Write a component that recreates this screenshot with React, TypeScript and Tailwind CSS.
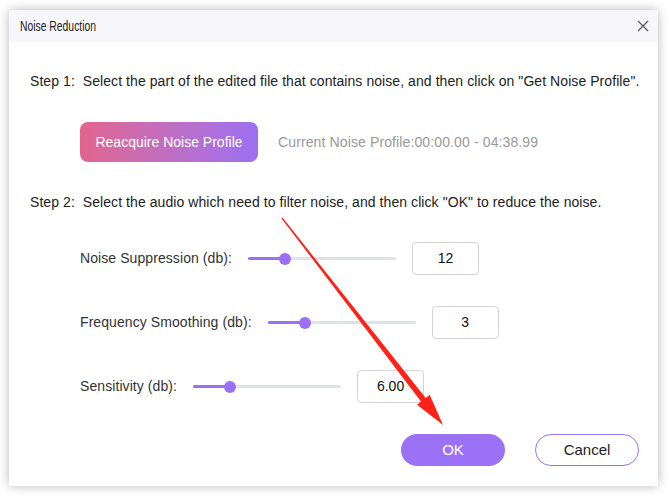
import React from "react";

function Slider() {
  return (
    <div className="relative w-[148px] h-[12px] flex items-center">
      <div className="w-full h-[3px] rounded-full bg-[#dde2ee]" />
      <div className="absolute left-0 top-[4.5px] w-[37px] h-[3px] rounded-l-full bg-[#9b70f4]" />
      <div className="absolute left-[31px] top-0 w-[12px] h-[12px] rounded-full bg-[#9b70f4]" />
    </div>
  );
}

function Row({ label, value }: { label: string; value: string }) {
  return (
    <div className="flex items-center gap-4 h-[33px]">
      <span className="text-[14px] text-[#333] tracking-[0.08px]">{label}</span>
      <Slider />
      <div className="w-[67px] h-[33px] border border-[#d3d3d8] rounded-[4px] flex items-center justify-center text-[14px] text-[#111]">
        {value}
      </div>
    </div>
  );
}

function Arrow() {
  const sx = 282, sy = 218, tx = 443, ty = 425;
  const dx = tx - sx, dy = ty - sy;
  const len = Math.hypot(dx, dy);
  const ux = dx / len, uy = dy / len;
  const nx = -uy, ny = ux;
  const headLen = 32, headW = 8, shaftW = 3, startW = 0.6;
  const bx = tx - ux * headLen, by = ty - uy * headLen;
  const pts = [
    [sx + nx * startW, sy + ny * startW],
    [bx + nx * shaftW, by + ny * shaftW],
    [bx + nx * headW, by + ny * headW],
    [tx, ty],
    [bx - nx * headW, by - ny * headW],
    [bx - nx * shaftW, by - ny * shaftW],
    [sx - nx * startW, sy - ny * startW],
  ]
    .map((p) => p.map((v) => v.toFixed(1)).join(","))
    .join(" ");
  return (
    <svg className="absolute left-0 top-0 pointer-events-none" width="669" height="496" viewBox="0 0 669 496">
      <polygon points={pts} fill="#ff2218" />
    </svg>
  );
}

export default function App() {
  return (
    <div className="relative w-[669px] h-[496px] bg-white pt-[10px] pl-[9px] font-['Liberation_Sans',Arial,sans-serif] overflow-hidden">
      <div className="w-[649px] h-[476px] bg-white flex flex-col shadow-[0_0_10px_rgba(0,0,0,0.28)]">
        <div className="h-[32px] bg-[#f7f7fb] flex items-center justify-between pl-[11px] pr-[9px]">
          <span className="text-[14px] text-[#222] inline-block origin-left scale-x-[0.74] whitespace-nowrap">
            Noise Reduction
          </span>
          <svg width="12" height="12" viewBox="0 0 12 12">
            <path d="M1 1 L11 11 M11 1 L1 11" stroke="#555" strokeWidth="1.2" />
          </svg>
        </div>
        <div className="flex flex-col pl-[21px] pr-[10px]">
          <div className="mt-[29px] h-[20px] leading-[20px] text-[14px] text-[#222] tracking-[0.07px] whitespace-nowrap">
            Step 1:&nbsp; Select the part of the edited file that contains noise, and then click on "Get Noise Profile".
          </div>
          <div className="mt-[31px] flex items-center pl-[50px] gap-5">
            <div className="w-[178px] h-[40px] rounded-[8px] bg-gradient-to-r from-[#e2648e] to-[#9c6ff3] flex items-center justify-center text-white text-[14px]">
              Reacquire Noise Profile
            </div>
            <span className="text-[14px] text-[#999] tracking-[0.12px]">Current Noise Profile:00:00.00 - 04:38.99</span>
          </div>
          <div className="mt-[30px] h-[20px] leading-[20px] text-[14px] text-[#222] tracking-[0.07px] whitespace-nowrap">
            Step 2:&nbsp; Select the audio which need to filter noise, and then click "OK" to reduce the noise.
          </div>
          <div className="mt-[30px] pl-[50px] flex flex-col gap-[31px]">
            <Row label="Noise Suppression (db):" value="12" />
            <Row label="Frequency Smoothing (db):" value="3" />
            <Row label="Sensitivity (db):" value="6.00" />
          </div>
          <div className="mt-[31px] flex justify-end gap-[30px] pr-[9px]">
            <div className="w-[104px] h-[32px] rounded-full bg-[#9b72f5] text-white text-[15px] flex items-center justify-center">
              OK
            </div>
            <div className="w-[104px] h-[32px] rounded-full border border-[#9b72f5] text-[#222] text-[15px] flex items-center justify-center">
              Cancel
            </div>
          </div>
        </div>
      </div>
      <Arrow />
    </div>
  );
}
